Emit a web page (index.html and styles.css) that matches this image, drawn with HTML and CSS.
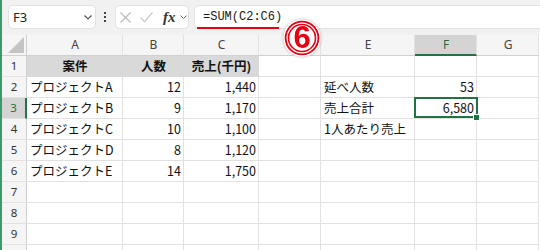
FILE: index.html
```html
<!DOCTYPE html>
<html lang="ja">
<head>
<meta charset="utf-8">
<link rel="stylesheet" href="styles.css">
</head>
<body>
<div class="app">
  <div class="toolbar">
    <div class="namebox"><span>F3</span>
      <svg class="chev" width="8" height="5" viewBox="0 0 8 5"><polyline points="0.5,0.5 4,4 7.5,0.5" fill="none" stroke="#555" stroke-width="1.1"/></svg>
    </div>
    <div class="dots"><i></i><i></i><i></i></div>
    <div class="fxbox">
      <svg class="ix" width="11" height="11" viewBox="0 0 11 11"><path d="M0.5 0.5 L10.5 10.5 M10.5 0.5 L0.5 10.5" stroke="#b9b9b9" stroke-width="1.1" fill="none"/></svg>
      <svg class="ic" width="13" height="11" viewBox="0 0 13 11"><polyline points="0.5,5.5 4.5,9.8 12.5,0.5" stroke="#b9b9b9" stroke-width="1.1" fill="none"/></svg>
      <span class="fx">fx</span>
      <svg class="chev2" width="7" height="4" viewBox="0 0 7 4"><polyline points="0.5,0.5 3.5,3.5 6.5,0.5" fill="none" stroke="#777" stroke-width="1"/></svg>
    </div>
    <div class="formula"><span class="ftext">=SUM(C2:C6)</span></div>
  </div>

  <div class="sheet">
    <div class="row hdr">
      <div class="corner"><svg width="16" height="16" viewBox="0 0 16 16"><polygon points="16,0 16,16 0,16" fill="#c4c4c4"/></svg></div>
      <div>A</div><div>B</div><div>C</div><div>D</div><div>E</div><div class="csel">F</div><div>G</div>
    </div>
    <div class="row">
      <div class="rh">1</div>
      <div class="fill">案件</div><div class="fill">人数</div><div class="fill">売上(千円)</div><div></div><div></div><div></div><div></div>
    </div>
    <div class="row">
      <div class="rh">2</div>
      <div>プロジェクトA</div><div class="n">12</div><div class="n">1,440</div><div></div><div>延べ人数</div><div class="n">53</div><div></div>
    </div>
    <div class="row">
      <div class="rh rsel">3</div>
      <div>プロジェクトB</div><div class="n">9</div><div class="n">1,170</div><div></div><div>売上合計</div><div class="n sel">6,580</div><div></div>
    </div>
    <div class="row">
      <div class="rh">4</div>
      <div>プロジェクトC</div><div class="n">10</div><div class="n">1,100</div><div></div><div>1人あたり売上</div><div></div><div></div>
    </div>
    <div class="row">
      <div class="rh">5</div>
      <div>プロジェクトD</div><div class="n">8</div><div class="n">1,120</div><div></div><div></div><div></div><div></div>
    </div>
    <div class="row">
      <div class="rh">6</div>
      <div>プロジェクトE</div><div class="n">14</div><div class="n">1,750</div><div></div><div></div><div></div><div></div>
    </div>
    <div class="row">
      <div class="rh">7</div>
      <div></div><div></div><div></div><div></div><div></div><div></div><div></div>
    </div>
    <div class="row">
      <div class="rh">8</div>
      <div></div><div></div><div></div><div></div><div></div><div></div><div></div>
    </div>
    <div class="row">
      <div class="rh">9</div>
      <div></div><div></div><div></div><div></div><div></div><div></div><div></div>
    </div>
    <div class="row last">
      <div class="rh"></div>
      <div></div><div></div><div></div><div></div><div></div><div></div><div></div>
    </div>
  </div>

  <div class="badge">
    <svg width="40" height="40" viewBox="0 0 40 40">
      <circle cx="20" cy="20" r="19" fill="#fff" stroke="#dcdcdc" stroke-width="0.8"/>
      <circle cx="20" cy="20" r="16.4" fill="none" stroke="#e60012" stroke-width="1.8"/>
      <circle cx="20" cy="20" r="13.5" fill="none" stroke="#e60012" stroke-width="1.6"/>
      <text x="20" y="30.3" text-anchor="middle" font-family="Liberation Sans, sans-serif" font-weight="bold" font-size="31" fill="#e60012">6</text>
    </svg>
  </div>
</div>
</body>
</html>
```

FILE: styles.css
```css
* { box-sizing: border-box; }
html, body { margin: 0; padding: 0; }
body {
  width: 540px;
  height: 250px;
  overflow: hidden;
  background: #fff;
  font-family: "Noto Sans CJK JP", sans-serif;
}
.app {
  position: relative;
  height: 250px;
  overflow: hidden;
  border-left: 2px solid #3a9a68;
  background: #fff;
}

/* ---------- toolbar ---------- */
.toolbar {
  display: flex;
  align-items: center;
  height: 35px;
  padding: 5px 0 6px 6px;
  background: #f1f1f1;
}
.namebox {
  width: 88px;
  height: 24px;
  background: #fff;
  border: 1px solid #e2e2e2;
  border-radius: 5px;
  display: flex;
  align-items: center;
  justify-content: space-between;
  padding: 0 3px 0 4px;
  font-family: "Noto Sans", sans-serif;
  font-size: 13px;
  color: #222;
  margin-right: 8px;
}
.dots {
  display: flex;
  flex-direction: column;
  gap: 2px;
  width: 3px;
  margin-right: 8px;
}
.dots i {
  display: block;
  width: 2px;
  height: 2px;
  background: #444;
}
.fxbox {
  width: 74px;
  height: 24px;
  background: #fff;
  border: 1px solid #e2e2e2;
  border-radius: 5px;
  display: flex;
  align-items: center;
  padding-left: 4px;
  margin-right: 5px;
}
.fxbox .ic { margin-left: 9px; }
.fxbox .fx {
  margin-left: 10px;
  font-family: "Liberation Serif", serif;
  font-style: italic;
  font-weight: bold;
  font-size: 15px;
  line-height: 1;
  color: #333;
}
.fxbox .chev2 { margin-left: 4px; }
.formula {
  flex: 1;
  height: 24px;
  background: #fff;
  border: 1px solid #e2e2e2;
  border-right: none;
  border-radius: 5px 0 0 5px;
  padding-left: 2px;
  display: flex;
}
.ftext {
  position: relative;
  display: flex;
  align-items: center;
  padding-left: 6px;
  font-family: "Liberation Mono", monospace;
  font-size: 12px;
  color: #1a1a1a;
}
.ftext::after {
  content: "";
  position: absolute;
  left: 0;
  right: 3px;
  bottom: -1px;
  height: 2px;
  background: #e60012;
}

/* ---------- sheet ---------- */
.row {
  display: grid;
  grid-template-columns: 25px 96px 61px 75px 62px 94px 62px 62px;
  height: 21px;
}
.row > div {
  border-right: 1px solid #e1e1e1;
  border-bottom: 1px solid #e1e1e1;
  font-size: 12.5px;
  line-height: 20px;
  padding: 0 2px 0 3px;
  white-space: nowrap;
  overflow: hidden;
  color: #111;
}
.hdr > div {
  background: #f5f5f5;
  text-align: center;
  font-family: "Noto Sans", sans-serif;
  font-size: 12px;
  color: #444;
  border-right-color: #e2e2e2;
  border-bottom-color: #d0d0d0;
}
.hdr > .corner {
  display: flex;
  align-items: flex-end;
  justify-content: flex-end;
  padding: 0 2px 2px 0;
  border-right-color: #cfcfcf;
}
.hdr > .csel {
  background: #d4d4d4;
  color: #1f6e43;
  border-bottom: 2px solid #217346;
  line-height: 19px;
}
.row > .rh {
  background: #f5f5f5;
  text-align: center;
  font-family: "Noto Sans", sans-serif;
  font-size: 11.5px;
  color: #333;
  padding: 0;
  border-right-color: #cfcfcf;
  border-bottom-color: #e2e2e2;
}
.row > .rsel {
  background: #d4d4d4;
  color: #1f6e43;
  border-right: 2px solid #217346;
}
.row > .fill {
  background: #d9d9d9;
  border-color: #d9d9d9;
  font-weight: bold;
  text-align: center;
}
.row > .n { text-align: right; }
.row > .sel {
  position: relative;
  overflow: visible;
}
.sel::after {
  content: "";
  position: absolute;
  top: -1px;
  left: -1px;
  right: -2px;
  bottom: 0;
  border: 2px solid #217346;
}
.sel::before {
  content: "";
  position: absolute;
  right: -4px;
  bottom: -3px;
  width: 5px;
  height: 5px;
  background: #217346;
  border: 1px solid #fff;
  z-index: 1;
}

/* ---------- annotation badge ---------- */
.badge {
  position: absolute;
  left: 280px;
  top: 18px;
  width: 40px;
  height: 40px;
}
.badge svg { display: block; filter: drop-shadow(0 0 1px rgba(0,0,0,0.15)); }
```
